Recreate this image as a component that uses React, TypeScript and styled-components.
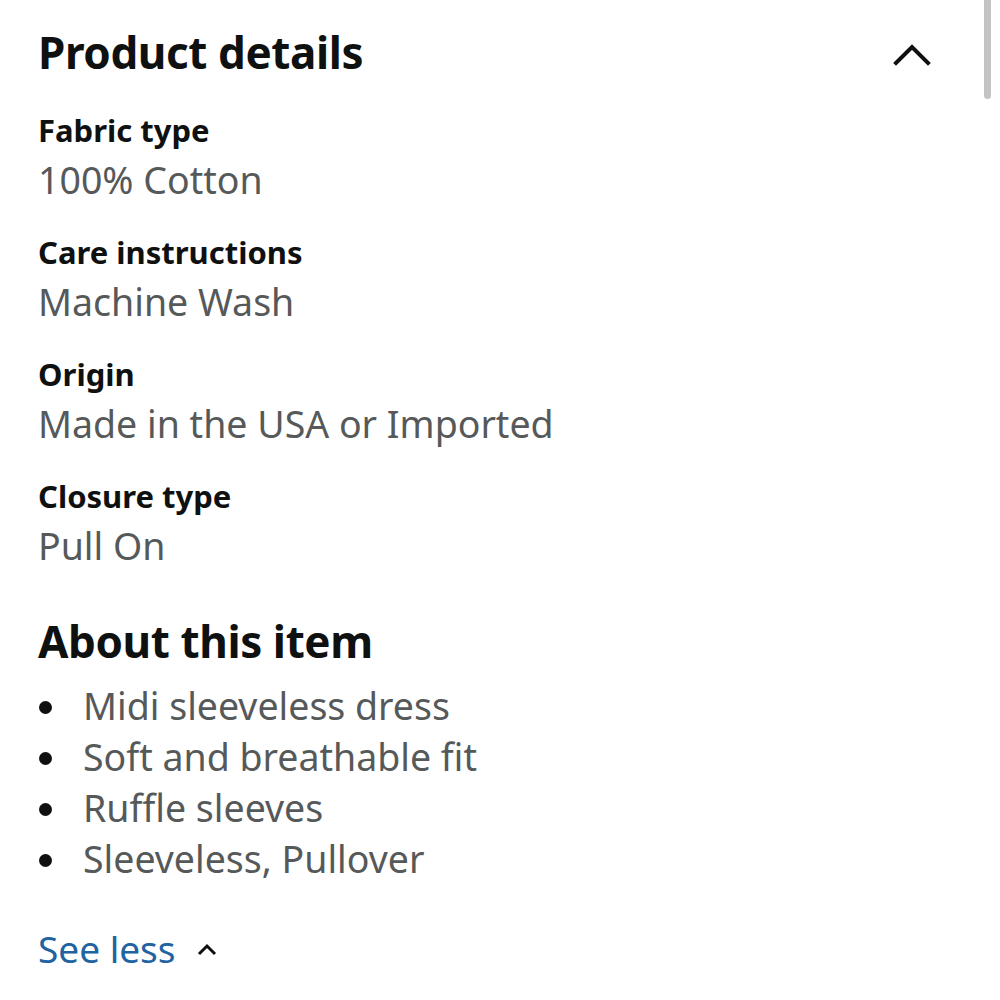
import React from "react";
import styled, { createGlobalStyle } from "styled-components";

const GlobalStyle = createGlobalStyle`
  html, body { margin: 0; padding: 0; background: #ffffff; }
  body { font-family: "Noto Sans", "Open Sans", sans-serif; color: #0f1111; }
`;

const Page = styled.div`
  position: relative;
  width: 1000px;
  height: 1000px;
  overflow: hidden;
  background: #fff;
  padding: 22px 0 0 38px;
  box-sizing: border-box;
`;

const HeaderRow = styled.div`
  display: flex;
  align-items: center;
  justify-content: space-between;
  width: 893px;
`;

const SectionTitle = styled.h2<{ $top?: number }>`
  margin: ${(p) => p.$top ?? 0}px 0 0 0;
  font-size: 44px;
  line-height: 60px;
  font-weight: 700;
  color: #0f1111;
  letter-spacing: -0.4px;
`;

const Chevron = styled.svg`
  display: block;
  margin-top: 4px;
`;

const DetailList = styled.dl`
  margin: 26px 0 0 0;
  display: flex;
  flex-direction: column;
  gap: 25px;
`;

const DetailGroup = styled.div`
  display: flex;
  flex-direction: column;
`;

const Label = styled.dt`
  font-size: 31px;
  line-height: 44px;
  font-weight: 700;
  color: #0f1111;
`;

const Value = styled.dd`
  margin: 3px 0 0 0;
  font-size: 37.5px;
  line-height: 50px;
  color: #565959;
`;

const Bullets = styled.ul`
  list-style: none;
  margin: 9px 0 0 0;
  padding: 0;
`;

const Bullet = styled.li`
  display: flex;
  align-items: center;
  font-size: 37.5px;
  line-height: 51px;
  color: #565959;
`;

const Dot = styled.span`
  flex: none;
  width: 13px;
  height: 13px;
  border-radius: 50%;
  background: #0f1111;
  margin: 4px 31px 0 1px;
`;

const SeeLess = styled.a`
  display: flex;
  align-items: center;
  gap: 21px;
  margin-top: 40px;
  font-size: 37px;
  line-height: 50px;
  color: #2162a1;
  text-decoration: none;
`;

const Scrollbar = styled.div`
  position: absolute;
  top: 0;
  right: 9px;
  width: 7px;
  height: 99px;
  border-radius: 0 0 4px 4px;
  background: #c4c4c4;
`;

const details = [
  { label: "Fabric type", value: "100% Cotton" },
  { label: "Care instructions", value: "Machine Wash" },
  { label: "Origin", value: "Made in the USA or Imported" },
  { label: "Closure type", value: "Pull On" },
];

const about = [
  "Midi sleeveless dress",
  "Soft and breathable fit",
  "Ruffle sleeves",
  "Sleeveless, Pullover",
];

export default function App() {
  return (
    <>
      <GlobalStyle />
      <Page>
        <HeaderRow>
          <SectionTitle>Product details</SectionTitle>
          <Chevron width="38" height="24" viewBox="0 0 38 24">
            <polyline
              points="3,21 19,5 35,21"
              fill="none"
              stroke="#0f1111"
              strokeWidth="4"
              strokeLinecap="square"
            />
          </Chevron>
        </HeaderRow>
        <DetailList>
          {details.map((d) => (
            <DetailGroup key={d.label}>
              <Label>{d.label}</Label>
              <Value>{d.value}</Value>
            </DetailGroup>
          ))}
        </DetailList>
        <SectionTitle $top={40}>About this item</SectionTitle>
        <Bullets>
          {about.map((a) => (
            <Bullet key={a}>
              <Dot />
              {a}
            </Bullet>
          ))}
        </Bullets>
        <SeeLess href="#">
          See less
          <svg width="20" height="13" viewBox="0 0 20 13">
            <polyline
              points="2,11 10,3 18,11"
              fill="none"
              stroke="#0f1111"
              strokeWidth="3"
            />
          </svg>
        </SeeLess>
        <Scrollbar />
      </Page>
    </>
  );
}
